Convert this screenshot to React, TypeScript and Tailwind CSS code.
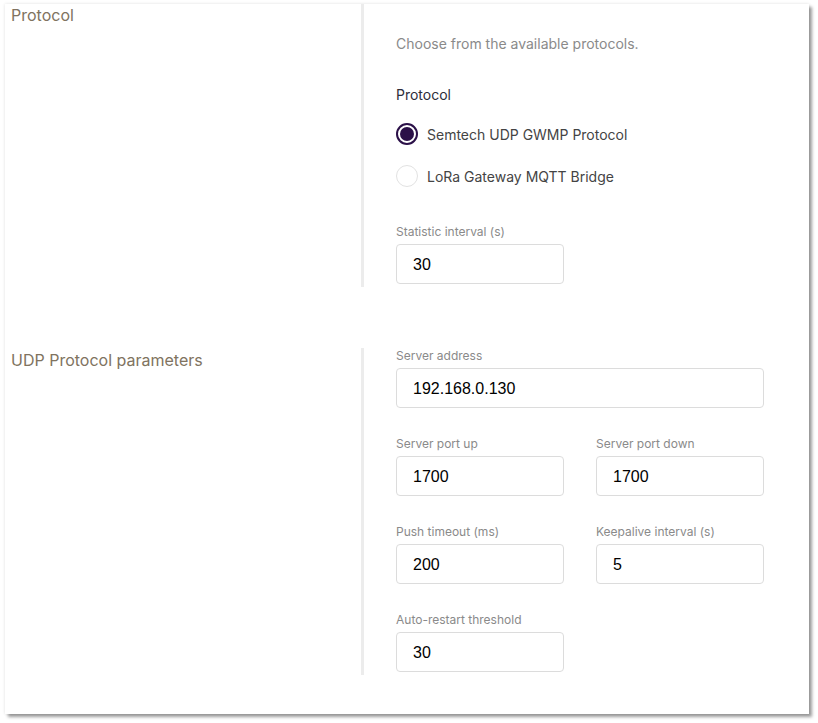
import React from "react";

const inter = { fontFamily: "Inter, 'Noto Sans', sans-serif" };

function Field({ label, value, wide }: { label: string; value: string; wide?: boolean }) {
  return (
    <div className="flex flex-col">
      <div className="text-[12px] leading-[16px] text-[#8a8a8a] h-[16px] mb-[4px]" style={inter}>
        {label}
      </div>
      <div
        className={`${wide ? "w-[368px]" : "w-[168px]"} h-[40px] rounded-[4px] border border-[#dcdcdc] flex items-center pl-[16px] pt-[2px] text-[16px] text-black`}
        style={{ fontFamily: "'Liberation Sans', Arial, sans-serif" }}
      >
        {value}
      </div>
    </div>
  );
}

function Radio({ checked, label }: { checked?: boolean; label: string }) {
  return (
    <div className="flex items-center h-[22px]">
      {checked ? (
        <div className="w-[22px] h-[22px] rounded-full border-2 border-[#2b1048] flex items-center justify-center">
          <div className="w-[14px] h-[14px] rounded-full bg-[#2b1048]" />
        </div>
      ) : (
        <div className="w-[22px] h-[22px] rounded-full border border-[#e2e2e2]" />
      )}
      <span className="ml-[9px] text-[14px] text-[#444]" style={inter}>
        {label}
      </span>
    </div>
  );
}

export default function App() {
  return (
    <div className="w-[818px] h-[723px] bg-white overflow-hidden">
      <div
        className="ml-[5px] mt-[4px] w-[804px] h-[710px] bg-white"
        style={{ boxShadow: "0 0 3px rgba(0,0,0,0.12), 3px 3px 3px rgba(0,0,0,0.38)" }}
      >
        {/* Section 1 */}
        <div className="flex">
          <div className="w-[356px] pl-[6px] text-[16px] leading-[22px] text-[#807360]" style={inter}>
            Protocol
          </div>
          <div className="w-[3px] bg-[#ececec] h-[283px]" />
          <div className="pl-[32px] pt-[30px] flex flex-col">
            <div className="text-[14px] leading-[20px] text-[#8a8a8a]" style={inter}>
              Choose from the available protocols.
            </div>
            <div className="mt-[31px] text-[14px] leading-[20px] text-[#2d2d3a]" style={inter}>
              Protocol
            </div>
            <div className="mt-[18px] flex flex-col gap-[20px]">
              <Radio checked label="Semtech UDP GWMP Protocol" />
              <Radio label="LoRa Gateway MQTT Bridge" />
            </div>
            <div className="mt-[37px]">
              <Field label="Statistic interval (s)" value="30" />
            </div>
          </div>
        </div>

        {/* Section 2 */}
        <div className="flex mt-[61px]">
          <div className="w-[356px] pl-[6px] pt-[1px] text-[16px] leading-[22px] text-[#807360]" style={inter}>
            UDP Protocol parameters
          </div>
          <div className="w-[3px] bg-[#ececec] h-[327px]" />
          <div className="pl-[32px] flex flex-col gap-[28px]">
            <Field label="Server address" value="192.168.0.130" wide />
            <div className="flex gap-[32px]">
              <Field label="Server port up" value="1700" />
              <Field label="Server port down" value="1700" />
            </div>
            <div className="flex gap-[32px]">
              <Field label="Push timeout (ms)" value="200" />
              <Field label="Keepalive interval (s)" value="5" />
            </div>
            <Field label="Auto-restart threshold" value="30" />
          </div>
        </div>
      </div>
    </div>
  );
}
